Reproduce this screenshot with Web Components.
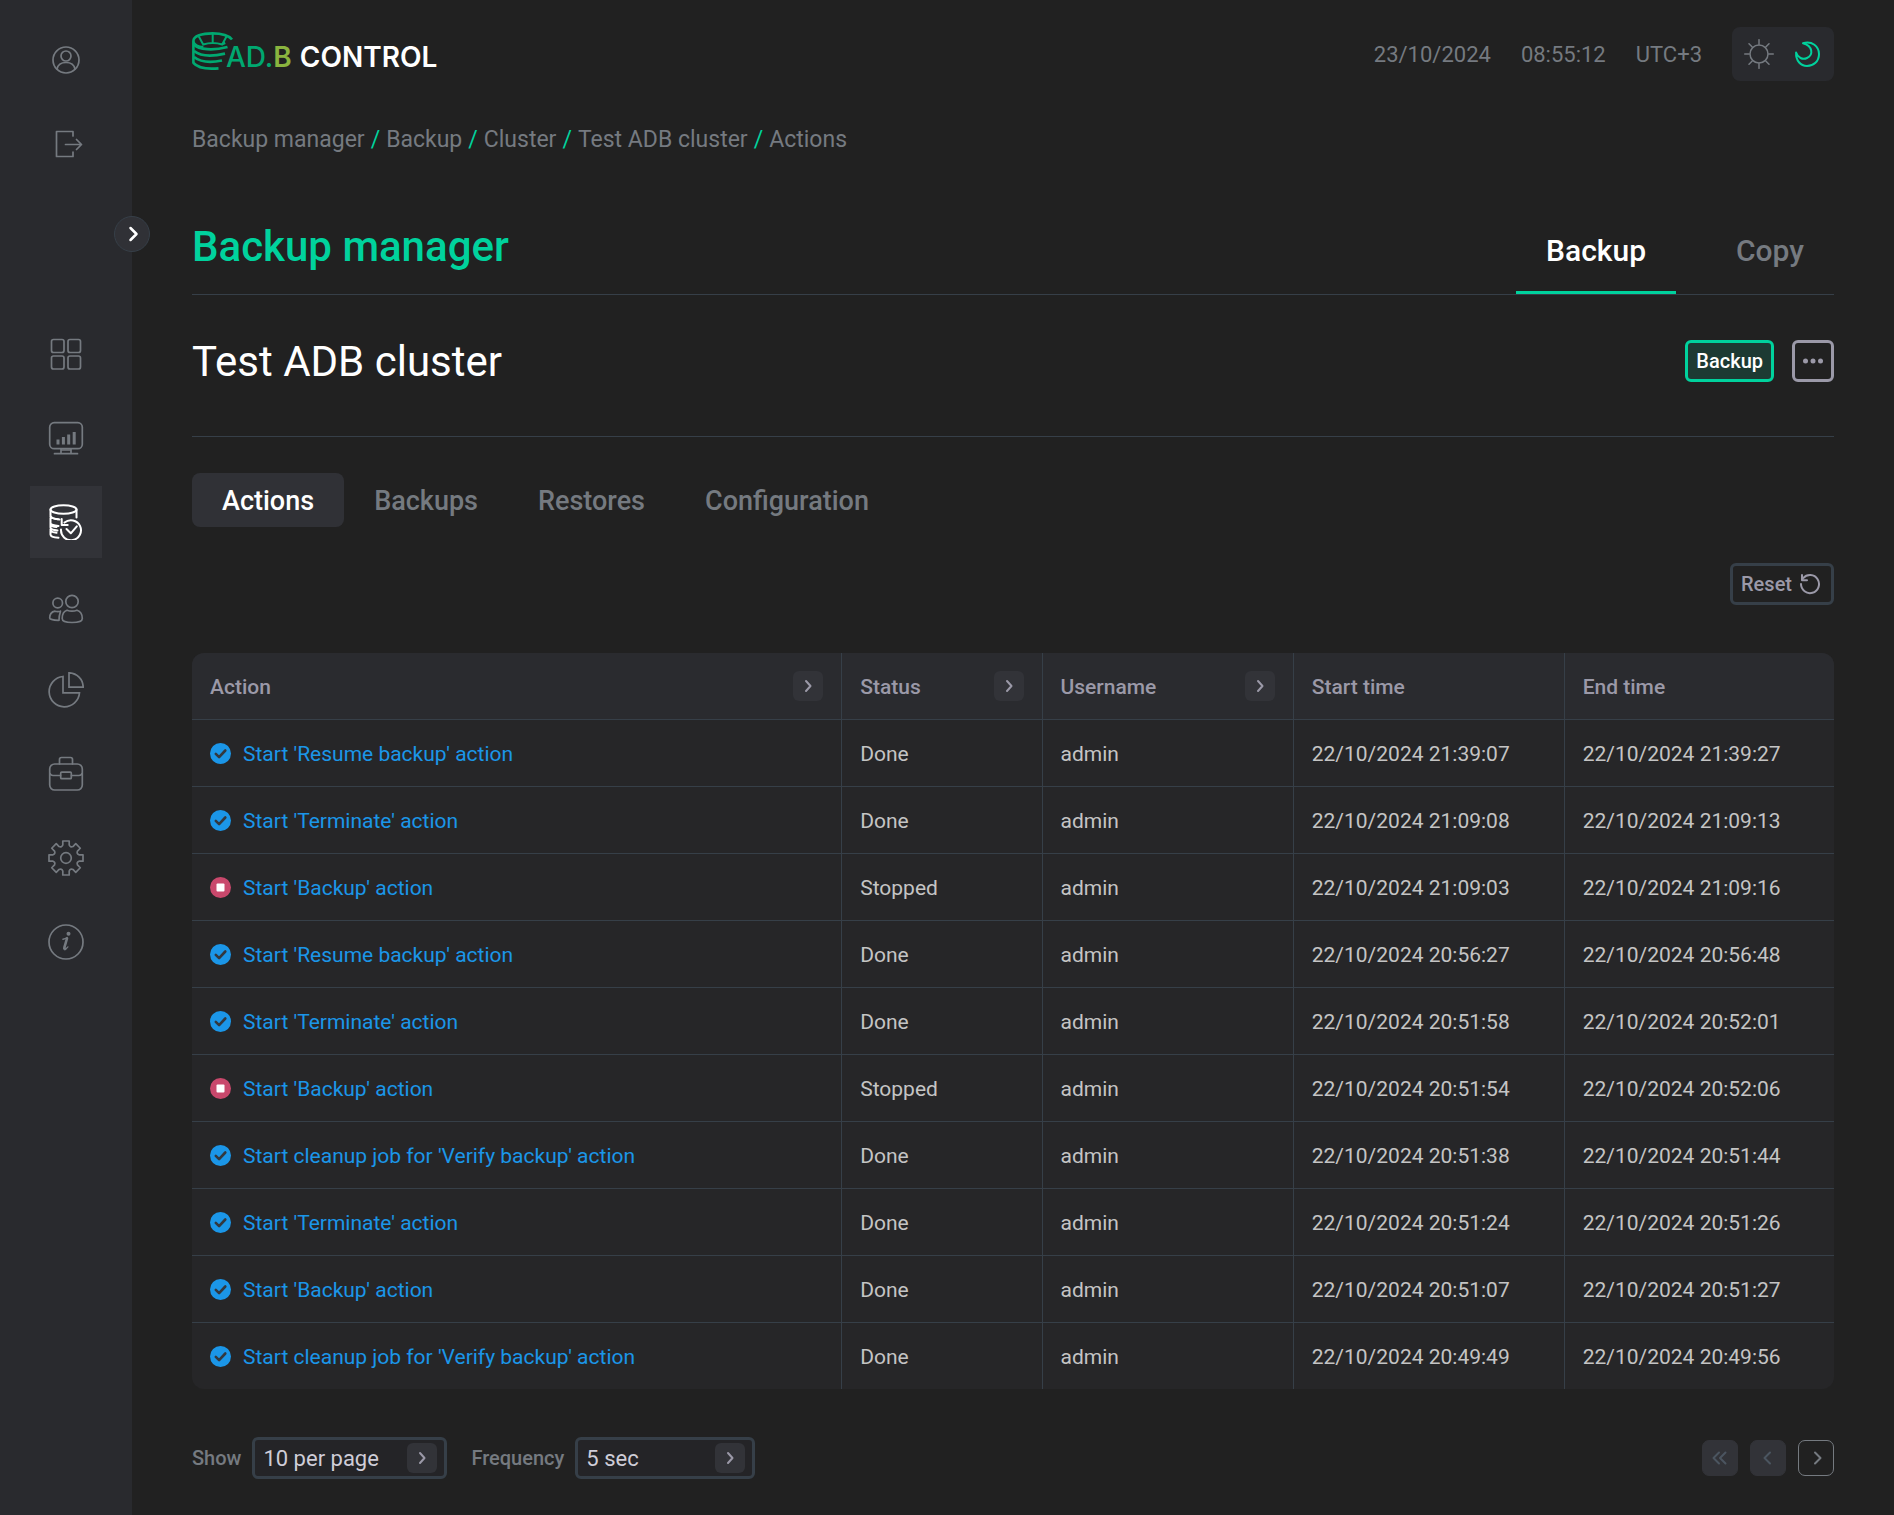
<!DOCTYPE html>
<html lang="en">
<head>
<meta charset="utf-8">
<meta name="viewport" content="width=device-width, initial-scale=1">
<title>Backup manager - Test ADB cluster</title>
<style>
  :root {
    --bg: #212121;
    --panel: #292a2e;
    --row: #262628;
    --raised: #323338;
    --line: #363f48;
    --muted: #757a80;
    --soft: #9b99a8;
    --text: #c4c4c4;
    --accent: #00d29d;
    --link: #1b96e8;
  }
  body {
    margin: 0;
    background: var(--bg);
    color: var(--text);
    font: 400 20px/30px Roboto, "Liberation Sans", sans-serif;
  }
</style>
</head>
<body>
<app-shell>
  <side-bar slot="side"></side-bar>
  <top-bar></top-bar>
  <bread-crumbs></bread-crumbs>
  <page-title heading="Backup manager"></page-title>
  <cluster-head heading="Test ADB cluster"></cluster-head>
  <pill-tabs></pill-tabs>
  <table-tools></table-tools>
  <actions-table></actions-table>
  <table-footer></table-footer>
</app-shell>

<script>
const gearPath = () => {
  const pts = [];
  for (let k = 0; k < 8; k++) {
    const a = k * Math.PI / 4;
    for (const [x, y] of [[-3.2, -13], [-3.2, -17], [3.2, -17], [3.2, -13]]) {
      const px = 18 + x * Math.cos(a) - y * Math.sin(a);
      const py = 18 + x * Math.sin(a) + y * Math.cos(a);
      pts.push([px.toFixed(2), py.toFixed(2)]);
    }
  }
  let d = '';
  pts.forEach((p, i) => {
    d += i === 0 ? `M${p}` : i % 4 === 0 ? `Q${(18 + 11.2 * Math.sin((i / 4 - .5) * Math.PI / 4)).toFixed(2)} ${(18 - 11.2 * Math.cos((i / 4 - .5) * Math.PI / 4)).toFixed(2)} ${p}` : `L${p}`;
  });
  return d + `Q${(18 + 11.2 * Math.sin(-Math.PI / 8)).toFixed(2)} ${(18 - 11.2 * Math.cos(Math.PI / 8)).toFixed(2)} ${pts[0]}Z`;
};

const svg = (w, h, body, sw = 1.7) =>
  `<svg width="${w}" height="${h}" viewBox="0 0 ${w} ${h}" fill="none" stroke="currentColor" stroke-width="${sw}" stroke-linejoin="round" stroke-linecap="round" aria-hidden="true">${body}</svg>`;

const ICONS = {
  user: svg(36, 36, '<circle cx="18" cy="18" r="13"/><circle cx="18" cy="14" r="5"/><path d="M9 27c1-5 4.600-6.500 9-6.500s8 1.500 9 6.500"/>'),
  logout: svg(36, 36, '<path d="M25 10V5.500H8.500v25H25V26M17.500 18.500h16M28.500 13.500l5 5-5 5"/>'),
  grid: svg(36, 36, '<rect x="3.500" y="3.500" width="12.500" height="13" rx="2"/><rect x="20" y="3.500" width="12.500" height="13" rx="2"/><rect x="3.500" y="20" width="12.500" height="13" rx="2"/><rect x="20" y="20" width="12.500" height="13" rx="2"/>'),
  monitor: svg(36, 36, '<rect x="1.700" y="2.700" width="32.600" height="26" rx="4.500"/><path d="M13 29v4.500M23 29v4.500M6.500 33.700h23M13 30h10" /><path d="M10 19.500v5M15.400 17v7.500M20.700 14.500v10M26.200 12v12.500" stroke-width="3" stroke-linecap="butt"/>'),
  backup: svg(36, 36, '<ellipse cx="15.500" cy="5.500" rx="13" ry="4.200"/><path d="M2.500 5.500v6c0 2 3.500 3.500 9 4M28.500 5.500v8"/><path d="M2.500 14v5c0 1.500 3.500 2.500 8 3M2.500 12.500c1 1.500 3.500 2.300 7.500 2.700M2.500 19v4.500c0 1.500 2.500 2.500 7 3M2.500 21c1 1 3.500 1.700 6 2M2.500 25v5.500c0 1.700 3 3 8 3.300M2.500 26.500c1 1.500 3.500 2 6 2.300"/><path d="M16.500 18.600A10 10 0 1 1 13 25.500M13.700 15v6h6"/><path d="M18.500 25l4.300 4.300 6-7"/>', 2),
  people: svg(36, 36, '<g transform="translate(0 5)"><circle cx="24" cy="8.500" r="6.200"/><circle cx="9.700" cy="10" r="4.800"/><path d="M19 17.200c-3.500 1-4.800 3.500-4.800 8.300 0 2.800 4.500 4 9.800 4s10.300-1.200 10.300-4c0-4.800-2-7.300-5.300-8.300-3.300 1.300-6.700 1.300-10 0zM12.500 18.200c-1.500.4-4 .4-5.500 0-3.500.6-5.300 2.700-5.300 6.800 0 1.300 4 2.300 8.800 2.300M12.500 18.200c-1 3-1.500 6-1.500 9"/></g>'),
  pie: svg(36, 36, '<path d="M15 4.500a15.200 15.200 0 1 0 16.500 16.300H15zM21 .8v14.300h14.200C35 7 29 1.200 21 .8z" stroke-linejoin="miter"/>'),
  briefcase: svg(36, 36, '<rect x="1.700" y="8" width="32.600" height="26" rx="5"/><path d="M11.500 8V3.500a2 2 0 0 1 2-2h9a2 2 0 0 1 2 2V8M2 17.500c.5 1.500 1.500 2 3 2h7.500M34 17.500c-.5 1.500-1.500 2-3 2h-7.500"/><rect x="12.700" y="16.200" width="10.600" height="6.500" rx="1"/>'),
  gear: svg(36, 36, `<path d="${gearPath()}"/><circle cx="18" cy="18" r="5.300"/>`),
  info: svg(36, 36, '<circle cx="18" cy="18" r="17"/><path d="M15 15.300c1.500-.3 2.900-.9 4.100-1.700" stroke-width="1.500"/><path d="M19 14.500l-2.600 8.800c-.4 1.500.2 2 .9 1.600" stroke-width="2.600"/><path d="M17 25c1-.2 2-1 2.900-2.200" stroke-width="1.200"/><circle cx="20.500" cy="9.800" r="2" fill="currentColor" stroke="none"/>'),
  chevron: svg(24, 24, '<path d="M10.500 6l6 6-6 6"/>', 2.500),
  small: svg(18, 18, '<path d="M7 4l4.500 5L7 14"/>', 2),
  prev: svg(18, 18, '<path d="M11 3.500L5.500 9l5.500 5.500"/>', 2),
  first: svg(18, 18, '<path d="M8 3.500L2.500 9 8 14.500M14.500 3.500L9 9l5.500 5.500"/>', 2),
  next: svg(18, 18, '<path d="M8 3.500L13.500 9 8 14.500"/>', 2),
  sun: svg(30, 30, '<circle cx="15" cy="15" r="9"/><path d="M15 .7v4.500M15 24.800v4.500M.7 15h4.500M24.800 15h4.500M5 4.800l3 3M22 22.200l3 3M25 4.800l-3 3M8 22.200l-3 3"/>', 1.5),
  moon: svg(30, 30, '<path d="M11 4.200c9-2.700 16 3.300 16 10.800s-5.500 12-12 12S3.700 21.500 4.100 13.500c1.600 5.300 6.600 7.500 10.900 5.500 6.500-3 6-12-4-14.800z"/>', 2),
  reset: svg(24, 22, '<path d="M4.200 5.200A9 9 0 1 1 2 11M3 2v5.200h5"/>', 2),
  dots: svg(24, 24, '<g fill="currentColor" stroke="none"><circle cx="4.500" cy="12" r="2.500"/><circle cx="12" cy="12" r="2.500"/><circle cx="19.500" cy="12" r="2.500"/></g>'),
  done: '<svg width="21" height="21" viewBox="0 0 21 21" role="img" aria-label="Done"><circle cx="10.500" cy="10.500" r="10.500" fill="#1b96e8"/><path d="M5.800 10.800l3.300 3.300 6.200-6.600" fill="none" stroke="#33383f" stroke-width="2.600" stroke-linecap="round" stroke-linejoin="round"/></svg>',
  stopped: '<svg width="21" height="21" viewBox="0 0 21 21" role="img" aria-label="Stopped"><circle cx="10.500" cy="10.500" r="10.500" fill="#c9486c"/><rect x="6.500" y="6.500" width="8" height="8" rx="1" fill="#fff"/></svg>'
};

const BASE = `
  *, *::before { box-sizing: border-box; }
  a { color: inherit; text-decoration: none; }
  button, select { font: inherit; color: inherit; margin: 0; padding: 0; border: 0; background: none; cursor: pointer; }
  svg { display: block; }
  h1, h2 { margin: 0; }
`;

const define = (name, css, html) => {
  customElements.define(name, class extends HTMLElement {
    constructor() {
      super();
      const root = this.attachShadow({ mode: 'open' });
      const t = document.createElement('template');
      t.innerHTML = `<style>${BASE}${css}</style>${typeof html === 'function' ? html(this) : html}`;
      root.append(t.content.cloneNode(true));
    }
  });
};

define('app-shell', `
  :host { display: flex; min-height: 100vh; }
  main { flex: 1; min-width: 0; padding: 27px 60px 36px; display: flex; flex-direction: column; }
`, '<slot name="side"></slot><main><slot></slot></main>');

define('nav-item', `
  :host { display: block; color: var(--muted); }
  :host([active]) { background: var(--raised); color: #fff; }
  a { display: grid; place-items: center; width: 72px; height: 72px; }
`, el => `<a href="#${el.getAttribute('icon')}" aria-label="${el.getAttribute('label')}">${ICONS[el.getAttribute('icon')]}</a>`);

define('side-bar', `
  :host { display: flex; flex-direction: column; align-items: center; flex: none; width: 132px; padding-top: 24px; background: var(--panel); position: relative; }
  div, nav { display: flex; flex-direction: column; gap: 12px; }
  nav { margin-top: 138px; }
  button { position: absolute; top: 216px; right: -18px; width: 36px; height: 36px; display: grid; place-items: center; border-radius: 50%; border: 1px solid var(--line); background: #303136; color: #fff; }
`, `
  <div>
    <nav-item icon="user" label="Profile"></nav-item>
    <nav-item icon="logout" label="Log out"></nav-item>
  </div>
  <nav aria-label="Main">
    <nav-item icon="grid" label="Dashboard"></nav-item>
    <nav-item icon="monitor" label="Monitoring"></nav-item>
    <nav-item icon="backup" label="Backup manager" active></nav-item>
    <nav-item icon="people" label="Users"></nav-item>
    <nav-item icon="pie" label="Resources"></nav-item>
    <nav-item icon="briefcase" label="Jobs"></nav-item>
    <nav-item icon="gear" label="Settings"></nav-item>
    <nav-item icon="info" label="Information"></nav-item>
  </nav>
  <button type="button" aria-label="Expand menu">${ICONS.chevron}</button>`);

define('app-logo', `
  :host { display: block; }
  a { display: flex; align-items: flex-start; color: #fff; font: 600 28px/36px Inter, "Liberation Sans", sans-serif; }
  svg { margin-right: -8px; }
  span { padding-top: 7px; }
  .ad { color: #00a870; font-weight: 500; }
  .b { color: #8ab43f; }
  .c { margin-left: 8px; }
`, `<a href="#home">
    <svg width="42" height="38" viewBox="0 0 42 38" fill="none" stroke="#00a870" stroke-width="2.600" aria-hidden="true">
      <path d="M1.400 31.500V9C1.400 4 10 1.400 20.500 1.400c10 0 16 1.800 19.500 6.100"/>
      <path d="M1.500 9.500c.8 2.500 3.500 4.800 9.800 5.600M6.800 4.500l4.400 8c6.300-2 12.700-2 19 0L34.500 4.500M20.700 2v9M29.800 12.500l3.500-1.500" stroke-width="2"/>
      <path d="M2 12.500c5 5.300 19 6.300 33.500 2.500M2 19c6 4.800 18 5.600 31 2.600M2 25c6 4.800 17 5.800 28 3.500M1.400 30.800C5.500 35.500 15 37.300 26.500 36.300" stroke-width="2.800"/>
    </svg><span class="ad">AD.</span><span class="b">B</span><span class="c">CONTROL</span></a>`);

define('top-bar', `
  :host { display: flex; justify-content: space-between; align-items: center; height: 54px; }
  .right { display: flex; align-items: center; gap: 30px; font-size: 22px; color: var(--muted); }
  .right span { padding-top: 2px; }
  app-logo { align-self: flex-start; padding-top: 5px; }
  .theme { display: flex; gap: 18px; padding: 12px; background: var(--panel); border-radius: 8px; }
  .theme .on { color: var(--accent); }
`, `<app-logo></app-logo>
  <div class="right"><span>23/10/2024</span><span>08:55:12</span><span>UTC+3</span>
    <div class="theme"><button type="button" aria-label="Light theme">${ICONS.sun}</button><button type="button" class="on" aria-label="Dark theme">${ICONS.moon}</button></div>
  </div>`);

define('bread-crumbs', `
  :host { display: block; margin-top: 44px; font-size: 23px; color: var(--muted); }
  nav { display: flex; gap: 6px; }
  i { font-style: normal; color: var(--accent); }
`, `<nav aria-label="Breadcrumb">${['Backup manager', 'Backup', 'Cluster', 'Test ADB cluster', 'Actions'].map(t => `<a href="#">${t}</a>`).join('<i>/</i>')}</nav>`);

define('page-title', `
  :host { display: flex; justify-content: space-between; align-items: flex-end; margin-top: 68px; border-bottom: 1px solid var(--line); }
  h1 { font-weight: 500; font-size: 42px; line-height: 48px; padding-bottom: 23px; color: var(--accent); }
  nav { display: flex; gap: 30px; font-weight: 500; font-size: 30px; line-height: 36px; color: var(--muted); }
  a { padding: 0 30px 22px; border-bottom: 3px solid transparent; }
  a.on { color: #fff; border-color: var(--accent); }
`, el => `<h1>${el.getAttribute('heading')}</h1><nav><a class="on" href="#backup">Backup</a><a href="#copy">Copy</a></nav>`);

define('outline-button', `
  :host { display: block; }
  button { display: flex; align-items: center; justify-content: center; gap: 7px; height: 42px; min-width: 42px; padding: 0 8px; border: 3px solid var(--line); border-radius: 6px; font-weight: 500; font-size: 20px; color: var(--soft); }
  :host([kind="primary"]) button { border-color: var(--accent); background: #1d3a33; color: #fff; }
  :host([kind="icon"]) button { padding: 0; border-color: var(--soft); }
`, el => `<button type="button" ${el.hasAttribute('label') ? `aria-label="${el.getAttribute('label')}"` : ''}><slot></slot>${ICONS[el.getAttribute('icon')] || ''}</button>`);

define('cluster-head', `
  :host { display: flex; justify-content: space-between; align-items: center; padding: 45px 0 54px; border-bottom: 1px solid var(--line); }
  h2 { font-weight: 400; font-size: 42px; line-height: 40px; padding-top: 2px; color: #fff; }
  div { display: flex; gap: 18px; }
`, el => `<h2>${el.getAttribute('heading')}</h2><div><outline-button kind="primary">Backup</outline-button><outline-button kind="icon" icon="dots" label="More actions"></outline-button></div>`);

define('pill-tabs', `
  :host { display: block; margin-top: 36px; font-weight: 500; font-size: 27px; line-height: 52px; color: var(--muted); }
  nav { display: flex; }
  a { padding: 2px 30px 0; border-radius: 8px; }
  a.on { background: #303136; color: #fff; }
`, '<nav aria-label="Cluster sections"><a class="on" href="#actions">Actions</a><a href="#backups">Backups</a><a href="#restores">Restores</a><a href="#configuration">Configuration</a></nav>');

define('table-tools', `
  :host { display: flex; justify-content: flex-end; margin: 36px 0 48px; }
`, '<outline-button icon="reset">Reset</outline-button>');

define('actions-table', `
  :host { display: block; border-radius: 12px; overflow: hidden; background: var(--row); }
  table { width: 100%; border-collapse: separate; border-spacing: 0; table-layout: fixed; font-size: 21px; }
  .c1 { width: 39.6%; } .c2 { width: 12.2%; } .c3 { width: 15.3%; } .c4 { width: 16.5%; }
  th, td { height: 67px; padding: 2px 18px 0; text-align: left; border-right: 1px solid var(--line); border-bottom: 1px solid var(--line); }
  th:last-child, td:last-child { border-right: 0; }
  tbody tr:last-child td { border-bottom: 0; height: 66px; }
  th { background: #2a2b2f; color: var(--soft); font-weight: 500; }
  th div { display: flex; justify-content: space-between; align-items: center; }
  button { display: grid; place-items: center; width: 30px; height: 30px; border-radius: 6px; background: var(--raised); }
  td a { display: flex; align-items: center; gap: 12px; color: var(--link); }
  th button, td svg { margin-top: -2px; }
`, () => {
  const R = "Start 'Resume backup' action", T = "Start 'Terminate' action", B = "Start 'Backup' action", V = "Start cleanup job for 'Verify backup' action";
  const rows = [
    [R, 'Done', '21:39:07', '21:39:27'], [T, 'Done', '21:09:08', '21:09:13'],
    [B, 'Stopped', '21:09:03', '21:09:16'], [R, 'Done', '20:56:27', '20:56:48'],
    [T, 'Done', '20:51:58', '20:52:01'], [B, 'Stopped', '20:51:54', '20:52:06'],
    [V, 'Done', '20:51:38', '20:51:44'], [T, 'Done', '20:51:24', '20:51:26'],
    [B, 'Done', '20:51:07', '20:51:27'], [V, 'Done', '20:49:49', '20:49:56']
  ];
  const head = (t, f) => `<th scope="col"><div>${t}${f ? `<button type="button" aria-label="Filter by ${t}">${ICONS.small}</button>` : ''}</div></th>`;
  return `<table><colgroup><col class="c1"><col class="c2"><col class="c3"><col class="c4"><col></colgroup>
    <thead><tr>${head('Action', 1)}${head('Status', 1)}${head('Username', 1)}${head('Start time')}${head('End time')}</tr></thead>
    <tbody>${rows.map(([a, s, x, y]) => `<tr><td><a href="#action">${ICONS[s.toLowerCase()]}${a}</a></td><td>${s}</td><td>admin</td><td>22/10/2024 ${x}</td><td>22/10/2024 ${y}</td></tr>`).join('')}</tbody></table>`;
});

define('select-field', `
  :host { display: flex; align-items: center; gap: 11px; font-weight: 500; font-size: 20px; color: var(--muted); }
  div { display: grid; align-items: center; }
  div > * { grid-area: 1 / 1; }
  select { appearance: none; height: 42px; width: 195px; padding: 2px 48px 0 8px; border: 3px solid var(--line); border-radius: 6px; background: #242427; color: #cfcdd8; font-weight: 400; font-size: 22px; }
  :host([narrow]) select { width: 180px; }
  span { justify-self: end; margin-right: 10px; display: grid; place-items: center; width: 30px; height: 30px; border-radius: 6px; background: var(--raised); color: var(--soft); pointer-events: none; }
`, el => `<label for="s">${el.getAttribute('label')}</label><div><select id="s"><option>${el.getAttribute('value')}</option></select><span>${ICONS.small}</span></div>`);

define('page-nav', `
  :host { display: flex; gap: 12px; }
  button { display: grid; place-items: center; width: 36px; height: 36px; border-radius: 7px; border: 1px solid var(--muted); color: var(--muted); }
  button:disabled { border-color: var(--raised); background: var(--raised); color: #4b5560; }
`, `<button type="button" disabled aria-label="First page">${ICONS.first}</button><button type="button" disabled aria-label="Previous page">${ICONS.prev}</button><button type="button" aria-label="Next page">${ICONS.next}</button>`);

define('table-footer', `
  :host { display: flex; align-items: center; gap: 24px; margin-top: 48px; }
  page-nav { margin-left: auto; }
`, '<select-field label="Show" value="10 per page"></select-field><select-field narrow label="Frequency" value="5 sec"></select-field><page-nav></page-nav>');
</script>
</body>
</html>
